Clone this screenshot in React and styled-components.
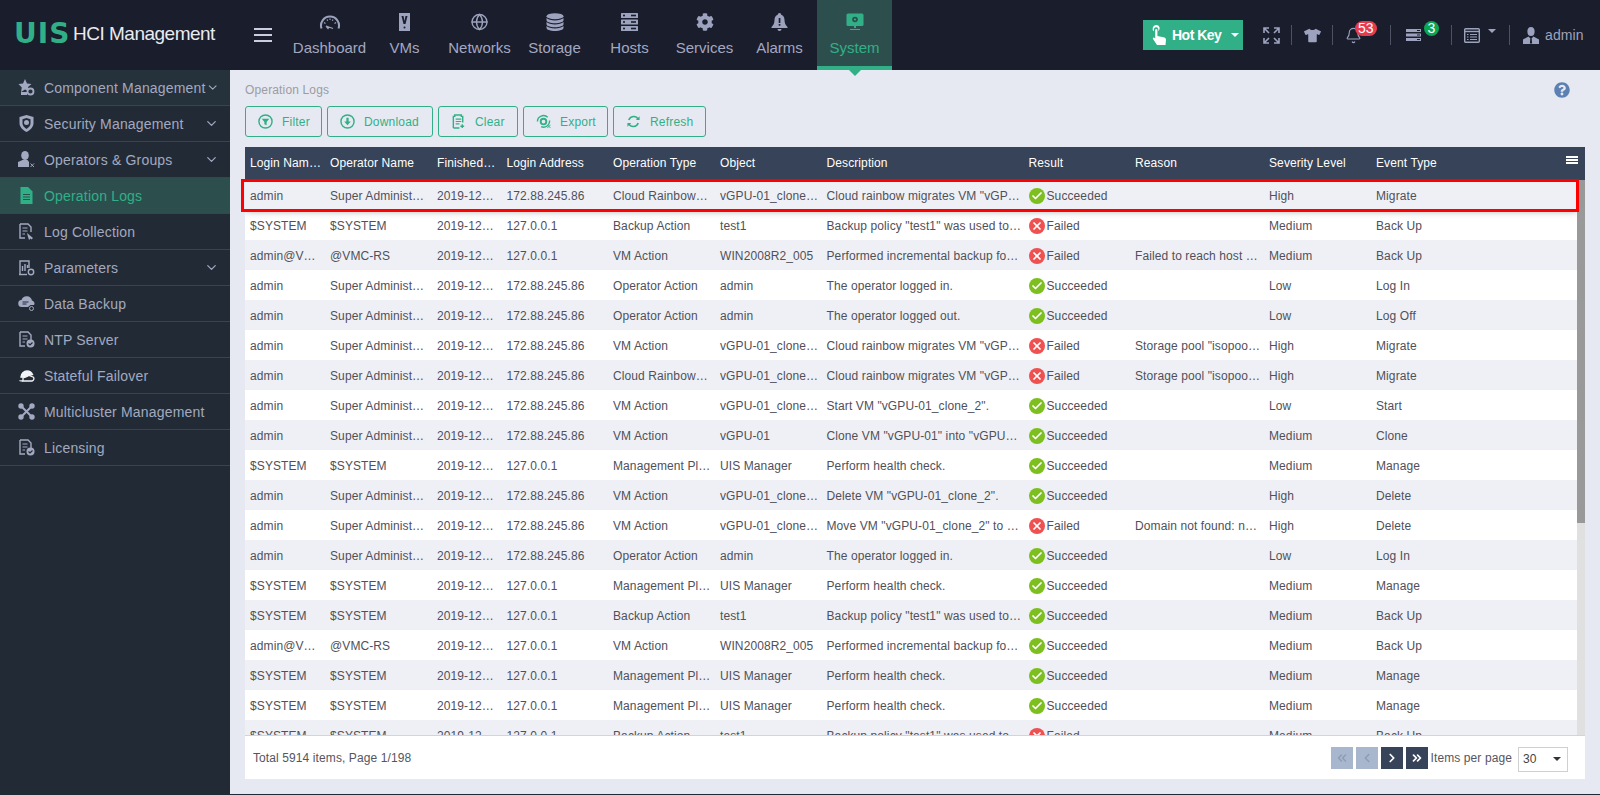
import React from "react";
import styled, { createGlobalStyle } from "styled-components";
import { ChevronDown, ChevronLeft, ChevronRight, ChevronsLeft, ChevronsRight, Globe, Bell, Check, X } from "lucide-react";
import { FaCog, FaTshirt, FaQuestionCircle } from "react-icons/fa";

const Global = createGlobalStyle`
  html, body { margin: 0; padding: 0; height: 100%; background: #1a1d2b; }
  body { font-family: "Liberation Sans", Arial, sans-serif; overflow: hidden; }
  * { box-sizing: border-box; }
`;

const GREEN = "#31b087";
const NAVC = "#9da3be";

const Page = styled.div`
  width: 1600px; height: 795px; display: flex; flex-direction: column; background: #e6e9f1;
  border-bottom: 1px solid #1f2a38;
`;
const TopBar = styled.header`
  height: 70px; flex: none; display: flex; align-items: stretch; background: #1a1d2b;
`;
const Brand = styled.div`
  width: 254px; flex: none; display: flex; align-items: center; padding: 0 0 2px 14px; gap: 5px;
`;
const BrandMark = styled.span`
  font-family: "DejaVu Sans", sans-serif; font-weight: 700; font-size: 28px; line-height: 1; color: ${GREEN};
  letter-spacing: 1px; width: 54px; white-space: nowrap;
`;
const BrandName = styled.span`
  font-size: 19px; color: #e9ebf0; letter-spacing: -0.5px; white-space: nowrap;
`;
const Burger = styled.button`
  width: 38px; flex: none; background: none; border: 0; padding: 0; display: flex; align-items: center;
  & span, & span::before, & span::after { display: block; width: 18px; height: 2px; background: #c9cde0; }
  & span { position: relative; }
  & span::before, & span::after { content: ""; position: absolute; left: 0; }
  & span::before { top: -6px; }
  & span::after { top: 6px; }
`;
const Nav = styled.nav`display: flex; flex: none;`;
const NavItem = styled.div`
  width: 75px; height: 70px; position: relative; display: flex; flex-direction: column; align-items: center;
  padding-top: 13px; color: ${(p) => (p.$active ? GREEN : "#a3a8c2")};
  font-size: 15px; white-space: nowrap;
  background: ${(p) => (p.$active ? "#2c4f4e" : "transparent")};
  border-bottom: ${(p) => (p.$active ? `4px solid ${GREEN}` : "0")};
  & > svg { height: 18px; flex: none; }
  & > span { margin-top: 8px; line-height: 18px; }
  ${(p) => p.$active && `&::after { content: ""; position: absolute; left: 50%; margin-left: -6px; bottom: -10px;
    border: 6px solid transparent; border-bottom-width: 0; border-top-color: ${GREEN}; }`}
`;
const TopRight = styled.div`
  margin-left: auto; display: flex; align-items: center; padding-right: 15px; color: ${NAVC};
`;
const HotKey = styled.button`
  width: 100px; height: 30px; background: ${GREEN}; color: #fff; border: 0; padding: 0 0 0 8px; margin-right: 20px;
  display: flex; align-items: center; gap: 5px; font: 700 14px "Liberation Sans", sans-serif; letter-spacing: -0.5px;
`;
const Caret = styled.i`
  display: inline-block; width: 0; height: 0; border: ${(p) => p.$s || 4}px solid transparent;
  border-bottom-width: 0; border-top-color: ${(p) => p.$c || "#fff"}; margin-left: ${(p) => p.$ml || 0}px;
`;
const TopTool = styled.div`
  position: relative; display: flex; align-items: center; height: 20px; flex: none;
  width: ${(p) => p.$w}px; padding-left: ${(p) => p.$pl || 0}px; justify-content: flex-start;
`;
const Sep = styled.i`width: 1px; height: 20px; background: #4c5163; flex: none;`;
const Badge = styled.b`
  position: absolute; top: -4px; left: ${(p) => p.$l}px; height: 15px; min-width: 15px; border-radius: 8px; padding: 0 3px;
  background: ${(p) => p.$c}; color: #fff; font: 400 14px/15px "Liberation Sans", sans-serif; text-align: center;
`;
const UserName = styled.span`font-size: 14px; color: #9da3be; margin-left: 6px; letter-spacing: .1px;`;

const Main = styled.div`flex: 1; min-height: 0; display: flex;`;
const Side = styled.aside`width: 230px; flex: none; background: #222b35;`;
const SideRow = styled.div`
  height: 36px; display: flex; align-items: center; padding: 0 11px 0 18px; border-bottom: 1px solid #3a4450;
  background: ${(p) => (p.$active ? "#2c4f4e" : p.$first ? "#25323b" : "transparent")};
  color: ${(p) => (p.$active ? GREEN : "#a3a9c0")}; font-size: 14px; letter-spacing: .18px; white-space: nowrap;
  & > svg:first-child { flex: none; width: 17px; height: 17px; margin-right: 9px; }
  & > span { flex: 1; }
`;
const Content = styled.main`flex: 1; min-width: 0; padding: 0 15px; display: flex; flex-direction: column; position: relative;`;
const Crumb = styled.div`
  height: 36px; flex: none; display: flex; align-items: center; justify-content: space-between; padding: 3px 15px 0 0;
  font-size: 12px; color: #9b9ca3; letter-spacing: .15px;
`;
const Help = styled.span`display: flex; color: #5d80b3;`;
const Toolbar = styled.div`height: 31px; flex: none; display: flex; gap: 5px; margin-bottom: 10px;`;
const ToolBtn = styled.button`
  height: 31px; width: ${(p) => p.$w}px; flex: none; border: 1px solid ${GREEN}; border-radius: 3px; background: transparent;
  color: ${GREEN}; font: 12px "Liberation Sans", sans-serif; letter-spacing: .2px; display: flex; align-items: center;
  padding: 0 0 0 12px; gap: 9px;
  & svg { width: 15px; height: 15px; flex: none; }
`;
const Panel = styled.section`flex: 1; min-height: 0; display: flex; flex-direction: column; position: relative; margin-bottom: 15px;`;
const COLS = "80px 107px 69.5px 106.5px 107px 106.5px 202px 106.5px 134px 107px 1fr";
const HeadRow = styled.div`
  height: 33px; flex: none; background: #364359; color: #fff; display: grid; grid-template-columns: ${COLS} 8px;
  align-items: center; font-size: 12px; letter-spacing: .1px; padding-bottom: 2px; position: relative;
`;
const HeadCell = styled.div`padding: 0 5px; white-space: nowrap;`;
const HeadMenu = styled.i`
  position: absolute; right: 7px; top: 9px; width: 12px; height: 2px; background: #fff;
  &::before, &::after { content: ""; position: absolute; left: 0; width: 12px; height: 2px; background: #fff; }
  &::before { top: 3px; } &::after { top: 6px; }
`;
const BodyWrap = styled.div`height: 555px; flex: none; display: flex; overflow: hidden; background: #fff;`;
const Rows = styled.div`flex: 1; min-width: 0; overflow: hidden;`;
const Row = styled.div`
  height: 30px; display: grid; grid-template-columns: ${COLS}; align-items: center; font-size: 12px; letter-spacing: .1px;
  color: #50505a; background: ${(p) => (p.$odd ? "#eff0f5" : "#fff")}; position: relative; padding-top: 1px;
  ${(p) => p.$hover && "box-shadow: 0 0 8px rgba(0,0,0,.45); z-index: 1;"}
`;
const Cell = styled.div`padding: 0 5px; white-space: nowrap;`;
const ResultCell = styled.div`padding: 0 5px; display: flex; align-items: center; gap: 2px; white-space: nowrap;`;
const Dot = styled.span`
  width: 16px; height: 16px; border-radius: 50%; flex: none; display: flex; align-items: center; justify-content: center;
  background: ${(p) => (p.$ok ? "#7cbf1e" : "#ef5050")}; color: #fff;
`;
const Scroll = styled.div`width: 8px; flex: none; background: #e0e0e0;`;
const Thumb = styled.div`height: 343px; background: #999;`;
const Highlight = styled.div`
  position: absolute; left: -4px; top: 32px; width: 1338px; height: 33px; border: 3px solid #f00; z-index: 3; pointer-events: none;
`;
const Foot = styled.footer`
  height: 44px; flex: none; background: #fff; border-top: 1px solid #d3d3d8; display: flex; align-items: center;
  padding: 0 17px 0 8px; font-size: 12px; color: #55555f; letter-spacing: .1px;
`;
const Total = styled.span`margin-right: auto; margin-top: 1px;`;
const PageBtn = styled.span`
  width: 22px; height: 22px; flex: none; margin-right: 3px; display: flex; align-items: center; justify-content: center;
  background: ${(p) => (p.$off ? "#a8b7cd" : "#364359")}; color: ${(p) => (p.$off ? "#8d9cb3" : "#fff")};
`;
const PerPage = styled.span`margin: 0 6px 0 0; white-space: nowrap;`;
const Select = styled.div`
  width: 50px; height: 25px; border: 1px solid #d0d0d0; display: flex; align-items: center; justify-content: space-between;
  padding: 0 6px 0 4px; font-size: 12px; color: #444; margin-top: 3px;
`;

const I = ({ w = 24, h = 24, vb = "0 0 24 24", children, ...r }) => (
  <svg width={w} height={h} viewBox={vb} {...r}>{children}</svg>
);

const Gauge = () => (
  <I w={22} h={18} vb="0 0 22 18" fill="none" stroke={NAVC}>
    <path d="M2.5 15.5 A9 9 0 1 1 19.5 15.5" strokeWidth="2" />
    <path d="M5 9.5l1.5 1M8 6.5l.7 1.3M11 5.5v1.5M14 6.5l-.7 1.3M17 9.5l-1.5 1M7 13l7 2.5M7 13l2.5 3" strokeWidth="1.2" />
  </I>
);
const VmIcon = () => (
  <I w={11} h={18} vb="0 0 11 18">
    <rect width="11" height="18" fill={NAVC} />
    <path d="M2.5 3h2l1 5 1-5h2l-2 8h-2z" fill="#1a1d2b" />
    <circle cx="5.5" cy="14.5" r="1" fill="#1a1d2b" />
  </I>
);
const Db = () => (
  <I w={18} h={18} vb="0 0 18 18" fill={NAVC}>
    <ellipse cx="9" cy="3.2" rx="8.5" ry="3" />
    <path d="M.5 5v2.2c0 1.6 3.8 3 8.5 3s8.5-1.4 8.5-3V5c-1.6 1.6-5 2.4-8.5 2.4S2 6.6.5 5z" />
    <path d="M.5 9v2.2c0 1.6 3.8 3 8.5 3s8.5-1.4 8.5-3V9c-1.6 1.6-5 2.4-8.5 2.4S2 10.6.5 9z" />
    <path d="M.5 13v2c0 1.6 3.8 3 8.5 3s8.5-1.4 8.5-3v-2c-1.6 1.6-5 2.4-8.5 2.4S2 14.6.5 13z" />
  </I>
);
const HostIc = () => (
  <I w={17} h={18} vb="0 0 17 18">
    {[0, 6.5, 13].map((y) => (
      <g key={y}>
        <rect y={y} width="17" height="5" rx=".6" fill={NAVC} />
        <rect x="2" y={y + 1.7} width="2" height="1.6" fill="#1a1d2b" />
        <rect x="10" y={y + 1.7} width="5" height="1.6" fill="#1a1d2b" />
      </g>
    ))}
  </I>
);
const BellFill = () => (
  <I w={17} h={18} vb="0 0 17 18">
    <path d="M8.5 0c1 0 1.7.8 1.7 1.7 2.3.8 3.3 2.8 3.3 5.3 0 3 1 5 3 7v1H.5v-1c2-2 3-4 3-7 0-2.5 1-4.5 3.3-5.300C6.800.8 7.500 0 8.500 0z" fill={NAVC} />
    <path d="M6.500 16h4a2 2 0 0 1-4 0z" fill={NAVC} />
    <rect x="7.700" y="5" width="1.700" height="5" fill="#1a1d2b" />
    <rect x="7.700" y="11" width="1.700" height="1.700" fill="#1a1d2b" />
  </I>
);
const Monitor = () => (
  <I w={18} h={18} vb="0 0 18 18">
    <rect x=".5" y=".5" width="17" height="12.5" rx="1.5" fill={GREEN} />
    <circle cx="9" cy="6.5" r="2.8" fill="#2c4f4e" />
    <circle cx="9" cy="6.5" r="1.1" fill={GREEN} />
    <path d="M8 13h2v2H8zM4 16h10v1H4z" fill={GREEN} />
  </I>
);
const FullScr = () => (
  <I w={17} h={17} vb="0 0 17 17" fill="none" stroke={NAVC} strokeWidth="1.6">
    <path d="M1 6V1h5M1 1l5 5M11 1h5v5M16 1l-5 5M1 11v5h5M1 16l5-5M11 16h5v-5M16 16l-5-5" />
  </I>
);
const Srv = () => (
  <I w={15} h={12} vb="0 0 15 12" fill={NAVC}>
    <path d="M0 0h15v3H0zM0 4.500h15v3H0zM0 9h15v3H0z" />
    <path d="M11 1h3v1h-3zM11 5.500h3v1h-3zM11 10h3v1h-3z" fill="#1a1d2b" />
  </I>
);
const Win = () => (
  <I w={16} h={15} vb="0 0 16 15" fill="none" stroke={NAVC}>
    <rect x=".7" y=".7" width="14.6" height="13.6" rx="1" strokeWidth="1.4" />
    <path d="M1 3.5h14" strokeWidth="1.4" />
    <path d="M3 6.5h1.5M6 6.5h7M3 9h1.5M6 9h7M3 11.5h1.5M6 11.5h7" strokeWidth="1.1" />
  </I>
);
const User = ({ c = NAVC }) => (
  <I w={16} h={17} vb="0 0 16 17" fill={c}>
    <ellipse cx="8" cy="4.5" rx="3.6" ry="4.5" />
    <path d="M5.500 9.500L0 12.500V17h16v-4.500l-5.500-3L8 12z" />
    <path d="M7.300 11.500h1.400l.4 5H6.900z" fill="#1a1d2b" />
  </I>
);
const Hand = () => (
  <I w={16} h={22} vb="0 0 16 22" fill="#fff" style={{ flex: "none" }}>
    <path d="M5 1a3.500 3.500 0 0 0-2 6.300V6A2.200 2.200 0 0 1 7.300 5v2.300A3.500 3.500 0 0 0 5 1z" />
    <path d="M4.200 6a1.100 1.100 0 0 1 2.200 0v6l6 1.200c1.500.3 2.600 1 2.600 2.500L14.500 21H6l-4-6c-.5-.8.4-1.800 1.300-1.200l.9.700z" />
  </I>
);

const sc = { fill: "currentColor" };
const st = { fill: "none", stroke: "currentColor", strokeWidth: 1.4 };
const DocBase = ({ children }) => (
  <I vb="0 0 17 17">
    <path d="M2 1h8l3 3v5M2 1v14h5" {...st} />
    <path d="M4.500 5h5M4.500 8h5M4.500 11h2.500" {...st} strokeWidth="1.1" />
    {children}
  </I>
);
const SideIcons = {
  comp: (
    <I vb="0 0 17 17">
      <path d="M7 0l2 4.500 4.500.5-3.500 3 1 4.500L7 10.500 3 13l.8-4.500L.5 5 5 4.500z" {...sc} />
      <circle cx="12.5" cy="12.5" r="3" fill="#25323b" stroke="currentColor" strokeWidth="1.8" />
      <path d="M3 13v3h6v-3" {...sc} />
    </I>
  ),
  sec: (
    <I vb="0 0 17 17">
      <path d="M8.500 0l7 2v6c0 4-3 7-7 9-4-2-7-5-7-9V2z" {...sc} />
      <path d="M8.500 3l4 1.300v4c0 2.500-1.800 4.400-4 5.700-2.200-1.300-4-3.200-4-5.700v-4z" fill="#222b35" />
      <circle cx="8.5" cy="7.5" r="2.5" {...sc} />
    </I>
  ),
  op: (
    <I vb="0 0 17 17">
      <ellipse cx="7" cy="4.5" rx="3.8" ry="4.5" {...sc} />
      <path d="M4.500 9L0 11v5h11v-5L9.500 9z" {...sc} />
      <path d="M12.500 12.500l3.500 3.500M16 12.500L12.500 16" {...st} strokeWidth="1" />
    </I>
  ),
  log: (
    <I vb="0 0 17 17">
      <path d="M2.500 0H10l4.500 4.500V17h-12z" {...sc} />
      <path d="M5 7.500h7M5 10h7M5 12.500h7" fill="none" stroke="#2c4f4e" strokeWidth="1.2" />
    </I>
  ),
  coll: (
    <DocBase>
      <path d="M9 10l6 5-1.500 1.500-1-1L11 17l-1.500-5z" {...sc} />
    </DocBase>
  ),
  par: (
    <I vb="0 0 17 17">
      <path d="M2 15V2h9v7" {...st} />
      <path d="M4.500 12V7M7 12V5M9.500 9V6" {...st} />
      <path d="M1 15.500h8" {...st} />
      <circle cx="13" cy="13" r="2.7" {...st} />
    </I>
  ),
  bak: (
    <I vb="0 0 17 17">
      <path d="M4 12a3.500 3.500 0 0 1-.5-7A5.500 5.500 0 0 1 14 5.500c1.500.5 2.500 1.700 2.500 3a3 3 0 0 1-.5 1.500h-3.500L10 12z" {...sc} />
      <path d="M4.500 7h6M4.500 9h4" fill="none" stroke="#222b35" strokeWidth="1" />
      <circle cx="13.5" cy="13.5" r="2" {...st} strokeWidth="1" />
    </I>
  ),
  lic: (
    <DocBase>
      <circle cx="12.5" cy="12.5" r="4" {...sc} />
      <path d="M10.500 12.500l1.500 1.500 2.500-2.500" fill="none" stroke="#222b35" strokeWidth="1.2" />
    </DocBase>
  ),
  fail: (
    <I vb="0 0 17 17">
      <path d="M3 10c0-3.500 3-6 6-6 2.500 0 4.500 1.300 5.500 3.500l-3 .8-3.500 2z" fill="#f2f3f6" stroke="#f2f3f6" strokeWidth="1.4" />
      <path d="M5 14h9a2.500 2.500 0 0 0 1.500-3.800L11 8.500l-3 1.500L5 11z" fill="#222b35" stroke="#f2f3f6" strokeWidth="1.3" />
      <path d="M1.500 13.500c0 .5 3 .5 3.500.5" fill="none" stroke="#f2f3f6" strokeWidth="1.3" />
    </I>
  ),
  multi: (
    <I vb="0 0 17 17">
      <path d="M3 3l11 11M14 3L3 14" fill="none" stroke="currentColor" strokeWidth="2" />
      <circle cx="3" cy="3" r="2.7" {...sc} /><circle cx="14" cy="3" r="2.7" {...sc} />
      <circle cx="3" cy="14" r="2.7" {...sc} /><circle cx="14" cy="14" r="2.7" {...sc} />
    </I>
  ),
};

const sideItems = [
  ["comp", "Component Management", true],
  ["sec", "Security Management", true],
  ["op", "Operators & Groups", true],
  ["log", "Operation Logs", false, true],
  ["coll", "Log Collection"],
  ["par", "Parameters", true],
  ["bak", "Data Backup"],
  ["lic", "NTP Server"],
  ["fail", "Stateful Failover"],
  ["multi", "Multicluster Management"],
  ["lic", "Licensing"],
];

const ring = { fill: "none", stroke: "currentColor", strokeWidth: 1.5 };
const tools = [
  ["Filter", 77, <I vb="0 0 16 16"><circle cx="8" cy="8" r="7" {...ring} /><path d="M4 5h8L9.200 8.500V12L6.800 11V8.500z" fill="currentColor" /></I>],
  ["Download", 106, <I vb="0 0 16 16"><circle cx="8" cy="8" r="7" {...ring} /><path d="M6.800 4h2.400v4H11.500L8 12 4.500 8h2.300z" fill="currentColor" /></I>],
  ["Clear", 80, <I vb="0 0 16 16"><path d="M2.500 15V2.500h1.500V1h7v1.500h1.500V9M2.500 15H9" {...ring} /><path d="M5 5.500h6M5 8h6M5 10.500h4" {...ring} strokeWidth="1.2" /><path d="M12 11v4M10 13h4" {...ring} /></I>],
  ["Export", 85, <I vb="0 0 16 16"><path d="M1.500 8a6.500 6.500 0 0 1 11-4.500M14.500 7a6.500 6.500 0 0 1-9 6.500" {...ring} /><circle cx="8" cy="8" r="3" {...ring} strokeWidth="2" /><path d="M12 11.500l3.500 3.500M15.500 11.500L12 15" {...ring} strokeWidth="1" /></I>],
  ["Refresh", 93, <I vb="0 0 16 16"><path d="M3 6.500A5.500 5.500 0 0 1 13 5.500M13 9.500A5.500 5.500 0 0 1 3 10.500" {...ring} strokeWidth="1.7" /><path d="M14.500 2.500v4h-4zM1.500 13.500v-4h4z" fill="currentColor" /></I>],
];

const heads = ["Login Nam…", "Operator Name", "Finished…", "Login Address", "Operation Type", "Object", "Description", "Result", "Reason", "Severity Level", "Event Type"];

const D = "2019-12…";
const SA = "Super Administ…";
const IP = "172.88.245.86";
const LO = "127.0.0.1";
const CL = "vGPU-01_clone…";
const CR = "Cloud Rainbow…";
const MP = "Management Pl…";
const MIG = 'Cloud rainbow migrates VM "vGP…';
const BK = 'Backup policy "test1" was used to…';
const INC = "Performed incremental backup fo…";
const HC = "Perform health check.";
const SP = 'Storage pool "isopoo…';
const adm = (t, o, d, ok, r, s, e) => ["admin", SA, IP, t, o, d, ok, r, s, e];
const sys = (t, o, d, ok, s, e) => ["$SYSTEM", "$SYSTEM", LO, t, o, d, ok, "", s, e];
const vmrs = (ok, r) => ["admin@V…", "@VMC-RS", LO, "VM Action", "WIN2008R2_005", INC, ok, r, "Medium", "Back Up"];
const rows = [
  adm(CR, CL, MIG, true, "", "High", "Migrate"),
  sys("Backup Action", "test1", BK, false, "Medium", "Back Up"),
  vmrs(false, "Failed to reach host …"),
  adm("Operator Action", "admin", "The operator logged in.", true, "", "Low", "Log In"),
  adm("Operator Action", "admin", "The operator logged out.", true, "", "Low", "Log Off"),
  adm("VM Action", CL, MIG, false, SP, "High", "Migrate"),
  adm(CR, CL, MIG, false, SP, "High", "Migrate"),
  adm("VM Action", CL, 'Start VM "vGPU-01_clone_2".', true, "", "Low", "Start"),
  adm("VM Action", "vGPU-01", 'Clone VM "vGPU-01" into "vGPU…', true, "", "Medium", "Clone"),
  sys(MP, "UIS Manager", HC, true, "Medium", "Manage"),
  adm("VM Action", CL, 'Delete VM "vGPU-01_clone_2".', true, "", "High", "Delete"),
  adm("VM Action", CL, 'Move VM "vGPU-01_clone_2" to …', false, "Domain not found: n…", "High", "Delete"),
  adm("Operator Action", "admin", "The operator logged in.", true, "", "Low", "Log In"),
  sys(MP, "UIS Manager", HC, true, "Medium", "Manage"),
  sys("Backup Action", "test1", BK, true, "Medium", "Back Up"),
  vmrs(true, ""),
  sys(MP, "UIS Manager", HC, true, "Medium", "Manage"),
  sys(MP, "UIS Manager", HC, true, "Medium", "Manage"),
  sys("Backup Action", "test1", BK, false, "Medium", "Back Up"),
];

export default function App() {
  return (
    <Page>
      <Global />
      <TopBar>
        <Brand>
          <BrandMark>UIS</BrandMark>
          <BrandName>HCI Management</BrandName>
        </Brand>
        <Burger><span /></Burger>
        <Nav>
          <NavItem><Gauge /><span>Dashboard</span></NavItem>
          <NavItem><VmIcon /><span>VMs</span></NavItem>
          <NavItem><Globe size={19} color={NAVC} strokeWidth={1.8} /><span>Networks</span></NavItem>
          <NavItem><Db /><span>Storage</span></NavItem>
          <NavItem><HostIc /><span>Hosts</span></NavItem>
          <NavItem><FaCog size={18} color={NAVC} /><span>Services</span></NavItem>
          <NavItem><BellFill /><span>Alarms</span></NavItem>
          <NavItem $active><Monitor /><span>System</span></NavItem>
        </Nav>
        <TopRight>
          <HotKey><Hand /><span>Hot Key</span><Caret $ml={5} /></HotKey>
          <TopTool $w={28}><FullScr /></TopTool>
          <Sep />
          <TopTool $w={40} $pl={12}><FaTshirt size={17} color={NAVC} /></TopTool>
          <Sep />
          <TopTool $w={57} $pl={12}>
            <Bell size={17} color={NAVC} strokeWidth={1.6} />
            <Badge $c="#e63c4e" $l={22}>53</Badge>
          </TopTool>
          <Sep />
          <TopTool $w={60} $pl={15}>
            <Srv />
            <Badge $c="#0ba556" $l={33}>3</Badge>
          </TopTool>
          <Sep />
          <TopTool $w={57} $pl={12}>
            <Win />
            <Caret $c={NAVC} $s={4.5} $ml={8} style={{ marginTop: -8 }} />
          </TopTool>
          <Sep />
          <TopTool $w={75} $pl={13}><User /><UserName>admin</UserName></TopTool>
        </TopRight>
      </TopBar>
      <Main>
        <Side>
          {sideItems.map(([ic, label, chev, active], i) => (
            <SideRow key={label} $active={active} $first={i === 0}>
              {SideIcons[ic]}
              <span>{label}</span>
              {chev && <ChevronDown size={15} strokeWidth={2} />}
            </SideRow>
          ))}
        </Side>
        <Content>
          <Crumb>
            <span>Operation Logs</span>
            <Help><FaQuestionCircle size={16} /></Help>
          </Crumb>
          <Toolbar>
            {tools.map(([label, w, icon]) => (
              <ToolBtn key={label} $w={w}>{icon}<span>{label}</span></ToolBtn>
            ))}
          </Toolbar>
          <Panel>
            <HeadRow>
              {heads.map((h) => <HeadCell key={h}>{h}</HeadCell>)}
              <HeadMenu />
            </HeadRow>
            <BodyWrap>
              <Rows>
                {rows.map((r, i) => (
                  <Row key={i} $odd={i % 2 === 0} $hover={i === 0}>
                    <Cell>{r[0]}</Cell>
                    <Cell>{r[1]}</Cell>
                    <Cell>{D}</Cell>
                    <Cell>{r[2]}</Cell>
                    <Cell>{r[3]}</Cell>
                    <Cell>{r[4]}</Cell>
                    <Cell>{r[5]}</Cell>
                    <ResultCell>
                      <Dot $ok={r[6]}>
                        {r[6] ? <Check size={12} strokeWidth={3.5} /> : <X size={12} strokeWidth={3.5} />}
                      </Dot>
                      {r[6] ? "Succeeded" : "Failed"}
                    </ResultCell>
                    <Cell>{r[7]}</Cell>
                    <Cell>{r[8]}</Cell>
                    <Cell>{r[9]}</Cell>
                  </Row>
                ))}
              </Rows>
              <Scroll><Thumb /></Scroll>
            </BodyWrap>
            <Highlight />
            <Foot>
              <Total>Total 5914 items, Page 1/198</Total>
              <PageBtn $off><ChevronsLeft size={14} strokeWidth={2.5} /></PageBtn>
              <PageBtn $off><ChevronLeft size={14} strokeWidth={2.5} /></PageBtn>
              <PageBtn><ChevronRight size={14} strokeWidth={3} /></PageBtn>
              <PageBtn><ChevronsRight size={14} strokeWidth={3} /></PageBtn>
              <PerPage>Items per page</PerPage>
              <Select><span>30</span><Caret $c="#333" $s={4} /></Select>
            </Foot>
          </Panel>
        </Content>
      </Main>
    </Page>
  );
}
